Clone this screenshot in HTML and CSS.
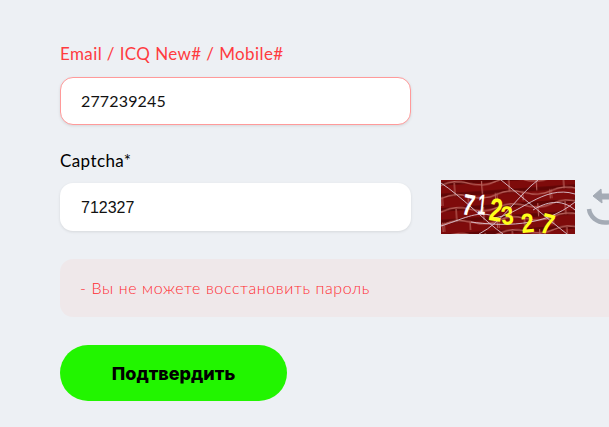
FILE: index.html
```html
<!DOCTYPE html>
<html lang="ru">
<head>
<meta charset="utf-8">
<title>Восстановление пароля</title>
<link rel="stylesheet" href="styles.css">
</head>
<body>
<form class="form">
  <div class="field">
    <label class="label label-error" for="login">Email / ICQ New# / Mobile#</label>
    <input class="input input-error input-login" id="login" type="text" value="277239245">
  </div>
  <div class="field field-captcha">
    <label class="label" for="captcha">Captcha*</label>
    <div class="captcha-row">
      <input class="input input-code" id="captcha" type="text" value="712327">
      <svg class="captcha-img" viewBox="0 0 134 54" width="134" height="54" aria-label="captcha">
        <defs>
          <pattern id="bricks" width="42" height="20" patternUnits="userSpaceOnUse" patternTransform="rotate(-4) scale(1.3)">
            <rect width="42" height="20" fill="#7e0b0b"/>
            <path d="M0 6h42M0 15h42" stroke="#5f0505" stroke-width="3" transform="translate(0 -3)"/>
            <path d="M0 4Q10 0 21 4T42 4M0 14Q10 10 21 14T42 14" fill="none" stroke="#b8605a" stroke-width="1"/>
            <path d="M10 3v10M31 3v10M20 13v8M41 13v8M0 13v8" fill="none" stroke="#b8605a" stroke-width="0.9"/>
          </pattern>
        </defs>
        <rect width="134" height="54" fill="url(#bricks)"/>
        <g fill="none" stroke="#dcc6d2" stroke-width="0.9">
          <path d="M0 3C20 16 45 42 62 54"/>
          <path d="M60 0C85 20 108 40 126 54"/>
          <path d="M38 54C62 42 78 14 97 0"/>
          <path d="M52 38C78 36 102 4 134 14"/>
          <path d="M30 42C60 46 102 48 134 22"/>
          <path d="M0 46C20 40 36 30 52 36"/>
          <path d="M92 30C105 22 120 18 134 30"/>
        </g>
        <g>
          <text class="digit digit-white" transform="translate(20 34) rotate(10) scale(1.2 1.65)">7</text>
          <text class="digit digit-white" transform="translate(36 34) rotate(6) scale(0.8 1.6)">1</text>
          <text class="digit" transform="translate(47 40) rotate(8) scale(1.3 1.8)">2</text>
          <text class="digit" transform="translate(61 45) rotate(-6) scale(1.25 1.45)">3</text>
          <text class="digit" transform="translate(81 53) rotate(-6) scale(1.3 1.5)">2</text>
          <text class="digit" transform="translate(98 52) rotate(14) scale(1.3 1.6)">7</text>
        </g>
      </svg>
      <svg class="refresh" viewBox="0 0 34 40" width="34" height="40" aria-label="refresh">
        <path d="M8 9L16 2L17 16Z" fill="#a4abb5" stroke="#a4abb5" stroke-width="1" stroke-linejoin="round"/>
        <path d="M14 9.5H34" fill="none" stroke="#a4abb5" stroke-width="6"/>
        <path d="M4 22C5 30 12 35.5 20 35.5C25 35.5 30 34 34 31" fill="none" stroke="#a4abb5" stroke-width="4.5"/>
      </svg>
    </div>
  </div>
  <div class="alert">- Вы не можете восстановить пароль</div>
  <button class="submit" type="button">Подтвердить</button>
</form>
</body>
</html>
```
FILE: styles.css
```css
html, body {
  margin: 0;
  height: 100%;
  overflow: hidden;
}
body {
  background: #edf0f4;
  font-family: "Lato", "Liberation Sans", sans-serif;
  color: #000;
}
.form {
  width: 640px;
  padding: 44px 0 0 60px;
}
.field {
  display: flex;
  flex-direction: column;
}
.field-captcha {
  margin-top: 26px;
}
.label {
  font-size: 17px;
  line-height: 20px;
  letter-spacing: 0.4px;
  margin-bottom: 13px;
}
.field-captcha .label {
  margin-bottom: 9px;
}
.label-error {
  color: #ff3b3f;
}
.input {
  width: 351px;
  height: 48px;
  box-sizing: border-box;
  border: 1px solid transparent;
  border-radius: 13px;
  background: #fff;
  box-shadow: 0 1px 3px rgba(0, 0, 0, 0.1);
  padding: 0 20px;
  font: 16px "Liberation Sans", sans-serif;
  color: #111;
  outline: none;
}
.input-login {
  font-family: "Lato", "Liberation Sans", sans-serif;
  letter-spacing: 0.15px;
  padding-bottom: 2px;
}
.input-code {
  padding-top: 1px;
}
.input-error {
  border-color: #ff9a9a;
}
.captcha-row {
  display: flex;
  align-items: center;
  gap: 30px;
}
.captcha-img {
  flex: none;
  display: block;
  overflow: visible;
}
.digit {
  font: 700 18px "Liberation Sans", sans-serif;
  fill: #ffff1a;
}
.digit-white {
  fill: #fff;
}
.refresh {
  flex: none;
  margin-left: -20px;
}
.alert {
  margin-top: 25px;
  width: 640px;
  height: 58px;
  box-sizing: border-box;
  padding: 0 20px 2px;
  display: flex;
  align-items: center;
  background: #efe8ea;
  border-radius: 13px;
  color: #ff2c32;
  font-size: 16px;
  font-weight: 300;
  letter-spacing: 0.6px;
}
.submit {
  display: block;
  margin-top: 28px;
  width: 227px;
  height: 56px;
  border: 0;
  border-radius: 28px;
  background: #22f500;
  color: #000;
  font: 800 18px "Inter", "Liberation Sans", sans-serif;
}
```
